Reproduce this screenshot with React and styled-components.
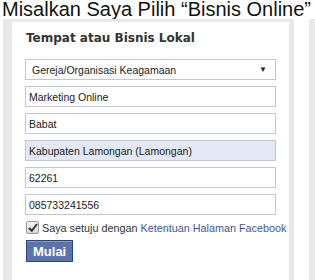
import styled, { createGlobalStyle } from "styled-components";

const GlobalStyle = createGlobalStyle`
  html, body {
    margin: 0;
    padding: 0;
    background: #ffffff;
    overflow: hidden;
  }
  body {
    font-family: "Liberation Sans", Arial, sans-serif;
  }
`;

const Page = styled.div`
  width: 315px;
  height: 280px;
  overflow: hidden;
  display: flex;
  flex-direction: column;
`;

const Title = styled.h1`
  margin: 0;
  padding-left: 2px;
  font-family: "Liberation Sans", Arial, sans-serif;
  font-weight: normal;
  font-size: 20px;
  line-height: 19px;
  height: 19px;
  color: #111;
  white-space: nowrap;
`;

const CardRow = styled.div`
  display: flex;
  gap: 15px;
  padding-left: 3px;
  flex: 1;
`;

const Card = styled.div`
  flex: 0 0 auto;
  width: ${(p) => p.$width}px;
  min-width: 0;
  background: #e9e9e9;
  padding: 3px 5px 0 9px;
  display: flex;
`;

const Panel = styled.div`
  flex: 1;
  min-width: 0;
  background: #ffffff;
  padding: 8px 13px 0 14px;
  display: flex;
  flex-direction: column;
`;

const Heading = styled.div`
  font-family: "DejaVu Sans", Verdana, sans-serif;
  font-size: 12px;
  font-weight: bold;
  line-height: 16px;
  color: #333;
  margin-bottom: 13px;
`;

const Fields = styled.div`
  display: flex;
  flex-direction: column;
  gap: 6px;
  margin-left: -1px;
`;

const SelectBox = styled.div`
  height: 21px;
  box-sizing: border-box;
  border: 1px solid #bdc7d8;
  background: #fff;
  display: flex;
  align-items: center;
  justify-content: space-between;
  padding: 0 8px 0 6px;
  font-size: 10.5px;
  color: #222;
`;

const Arrow = styled.span`
  font-size: 8px;
  color: #222;
`;

const Field = styled.input`
  height: 21px;
  box-sizing: border-box;
  width: 100%;
  min-width: 0;
  margin: 0;
  border: 1px solid #bdc7d8;
  background: ${(p) => (p.$filled ? "#e4e8f5" : "#fff")};
  padding: 0 3px;
  font-family: "Liberation Sans", Arial, sans-serif;
  font-size: 10.5px;
  color: #222;
  outline: none;
`;

const Agree = styled.label`
  display: flex;
  align-items: center;
  gap: 3px;
  margin-top: 6px;
  font-size: 10.8px;
  color: #333;
  white-space: nowrap;
`;

const Check = styled.span`
  flex: 0 0 13px;
  width: 13px;
  height: 13px;
  box-sizing: border-box;
  border: 1px solid #9a9a9a;
  border-radius: 2px;
  background: linear-gradient(#f4f4f4, #d8d8d8);
  display: flex;
  align-items: center;
  justify-content: center;
`;

const Link = styled.a`
  color: #3b5998;
  text-decoration: none;
`;

const Button = styled.button`
  align-self: flex-start;
  margin-top: 6px;
  height: 22px;
  padding: 0 6px;
  border: 1px solid #29447e;
  background: #5b74a8;
  box-shadow: inset 0 1px 0 #8a9cc2;
  color: #fff;
  font-family: "Liberation Sans", Arial, sans-serif;
  font-size: 13px;
  font-weight: bold;
`;

export default function App() {
  return (
    <Page>
      <GlobalStyle />
      <Title>Misalkan Saya Pilih “Bisnis Online”</Title>
      <CardRow>
        <Card $width={277}>
          <Panel>
            <Heading>Tempat atau Bisnis Lokal</Heading>
            <Fields>
              <SelectBox>
                <span>Gereja/Organisasi Keagamaan</span>
                <Arrow>▼</Arrow>
              </SelectBox>
              <Field readOnly defaultValue="Marketing Online" />
              <Field readOnly defaultValue="Babat" />
              <Field readOnly $filled defaultValue="Kabupaten Lamongan (Lamongan)" />
              <Field readOnly defaultValue="62261" />
              <Field readOnly defaultValue="085733241556" />
            </Fields>
            <Agree>
              <Check>
                <svg width="10" height="9" viewBox="0 0 10 9">
                  <path d="M1 5 L3.8 7.8 L9 1" fill="none" stroke="#333" strokeWidth="2" />
                </svg>
              </Check>
              <span>
                Saya setuju dengan <Link href="#">Ketentuan Halaman Facebook</Link>
              </span>
            </Agree>
            <Button>Mulai</Button>
          </Panel>
        </Card>
        <Card $width={100}>
          <Panel />
        </Card>
      </CardRow>
    </Page>
  );
}
